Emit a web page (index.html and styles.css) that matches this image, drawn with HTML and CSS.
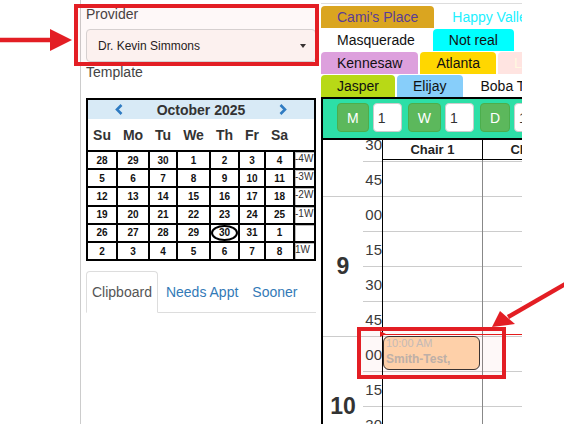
FILE: index.html
```html
<!DOCTYPE html>
<html lang="en">
<head>
  <meta charset="UTF-8">
  <title>Schedule</title>
  <link rel="stylesheet" href="styles.css">
</head>
<body>
<div class="page">
  <div class="gutter"></div>

  <!-- Left column: provider, month calendar, lists -->
  <aside class="sidebar">
    <div class="field-label">Provider</div>
    <div class="select">
      <span>Dr. Kevin Simmons</span>
      <span class="caret"></span>
    </div>
    <div class="field-label">Template</div>

    <div class="calendar">
      <div class="cal-head">
        <svg class="chev" width="8" height="11" viewBox="0 0 8 11"><path d="M6.5 1 L2 5.5 L6.5 10"/></svg>
        <span class="cal-title">October 2025</span>
        <svg class="chev" width="8" height="11" viewBox="0 0 8 11"><path d="M1.5 1 L6 5.5 L1.5 10"/></svg>
      </div>
      <div class="cal-days">
        <span>Su</span><span>Mo</span><span>Tu</span><span>We</span><span>Th</span><span>Fr</span><span>Sa</span><span></span>
      </div>
      <div class="cal-grid">
        <span>28</span><span>29</span><span>30</span><span>1</span><span>2</span><span>3</span><span>4</span><span class="week">-4W</span>
        <span>5</span><span>6</span><span>7</span><span>8</span><span>9</span><span>10</span><span>11</span><span class="week">-3W</span>
        <span>12</span><span>13</span><span>14</span><span>15</span><span>16</span><span>17</span><span>18</span><span class="week">-2W</span>
        <span>19</span><span>20</span><span>21</span><span>22</span><span>23</span><span>24</span><span>25</span><span class="week">-1W</span>
        <span>26</span><span>27</span><span>28</span><span>29</span><span><i class="today">30</i></span><span>31</span><span>1</span><span class="week"></span>
        <span>2</span><span>3</span><span>4</span><span>5</span><span>6</span><span>7</span><span>8</span><span class="week">1W</span>
      </div>
    </div>

    <ul class="nav-tabs">
      <li class="active">Clipboard</li>
      <li>Needs Appt</li>
      <li>Sooner</li>
    </ul>
  </aside>

  <!-- Right column: offices, range stepper, day grid -->
  <section class="board">
    <div class="clinics">
      <div class="clinic-row">
        <span class="clinic cami">Cami's Place</span>
        <span class="clinic happy">Happy Valley</span>
      </div>
      <div class="clinic-row">
        <span class="clinic">Masquerade</span>
        <span class="clinic notreal">Not real</span>
      </div>
      <div class="clinic-row">
        <span class="clinic kennesaw">Kennesaw</span>
        <span class="clinic atlanta">Atlanta</span>
        <span class="clinic lawrence">Lawrenceville</span>
      </div>
      <div class="clinic-row">
        <span class="clinic jasper">Jasper</span>
        <span class="clinic elijay">Elijay</span>
        <span class="clinic">Boba Tea</span>
      </div>
    </div>

    <div class="toolbar">
      <button class="step-btn">M</button>
      <input class="step-input" type="text" value="1">
      <button class="step-btn">W</button>
      <input class="step-input" type="text" value="1">
      <button class="step-btn">D</button>
      <input class="step-input" type="text" value="1">
    </div>

    <div class="schedule">
      <div class="slots">
        <div class="hours">
          <div class="hour part"></div>
          <div class="hour">9</div>
          <div class="hour">10</div>
        </div>
        <div class="minutes">
          <div class="minute">30</div>
          <div class="minute">45</div>
          <div class="minute">00</div>
          <div class="minute">15</div>
          <div class="minute">30</div>
          <div class="minute">45</div>
          <div class="minute">00</div>
          <div class="minute">15</div>
          <div class="minute">30</div>
          <div class="minute">45</div>
        </div>
        <div class="chair">
          <div class="slot"></div><div class="slot"></div><div class="slot"></div><div class="slot"></div><div class="slot"></div>
          <div class="slot"></div><div class="slot"></div><div class="slot"></div><div class="slot"></div><div class="slot"></div>
          <div class="appt">
            <div class="appt-time">10:00 AM</div>
            <div class="appt-name">Smith-Test,</div>
          </div>
        </div>
        <div class="chair">
          <div class="slot"></div><div class="slot"></div><div class="slot"></div><div class="slot"></div><div class="slot"></div>
          <div class="slot"></div><div class="slot"></div><div class="slot"></div><div class="slot"></div><div class="slot"></div>
        </div>
      </div>

      <div class="chair-head">
        <div class="chair-name">Chair 1</div>
        <div class="chair-name">Chair 2</div>
      </div>
      <div class="now-line"></div>
    </div>
  </section>

  <!-- callouts -->
  <svg class="marks" width="564" height="424" viewBox="0 0 564 424">
    <rect x="76" y="6" width="241" height="58"/>
    <rect x="359" y="329" width="145" height="48"/>
    <line x1="0" y1="40" x2="54" y2="40"/>
    <polygon points="50,29 72,40 50,51"/>
    <line x1="567" y1="283" x2="508" y2="317"/>
    <polygon points="492,327 500,311 515,324"/>
  </svg>
</div>
</body>
</html>
```

FILE: styles.css
```css
* { box-sizing: border-box; margin: 0; padding: 0; }
body { font-family: 'Liberation Sans', Arial, sans-serif; background: #fff; color: #222; }

.page {
  position: relative;
  display: flex;
  width: 564px;
  height: 424px;
  overflow: hidden;
}

.gutter {
  width: 81px;
  flex-shrink: 0;
  border-right: 1px solid #ccc;
}

/* ---------- sidebar ---------- */

.sidebar {
  width: 240px;
  flex-shrink: 0;
  padding: 4px 5px 0;
}

.field-label {
  font-size: 14px;
  line-height: 20px;
  color: #444;
}

.select {
  margin-top: 5px;
  height: 33px;
  display: flex;
  align-items: center;
  justify-content: space-between;
  padding: 0 9px 0 11px;
  background: #fdf8f6;
  border: 1px solid #d6d6d6;
  border-radius: 4px;
  font-size: 12px;
  color: #222;
}

.caret {
  border-top: 4px solid #333;
  border-left: 3.5px solid transparent;
  border-right: 3.5px solid transparent;
}

.calendar {
  margin-top: 16px;
  border: 2px solid #000;
}

.cal-head {
  height: 19px;
  background: #d8eaf6;
  display: flex;
  align-items: center;
  justify-content: space-between;
  padding: 0 27px;
}

.chev path {
  fill: none;
  stroke: #2f7bc2;
  stroke-width: 2.6;
}

.cal-title {
  font-weight: bold;
  font-size: 14px;
  color: #333;
}

.cal-days,
.cal-grid {
  display: grid;
  grid-template-columns: 28px 30px 26px 31px 27px 24px 27px 19px;
  column-gap: 2px;
}

.cal-days {
  height: 31px;
  align-items: center;
  text-align: center;
  font-weight: bold;
  font-size: 14px;
  color: #333;
}

.cal-grid {
  row-gap: 2px;
  grid-auto-rows: 16.2px;
  background: #000;
  border-top: 2px solid #000;
}

.cal-grid span {
  background: #fff;
  display: flex;
  align-items: center;
  justify-content: center;
  font-size: 10px;
  font-weight: bold;
  color: #111;
}

.cal-grid .week {
  align-items: flex-start;
  justify-content: flex-start;
  font-weight: normal;
  color: #333;
  line-height: 12px;
  padding-top: 1px;
  box-shadow: inset 1px 1px 0 #bbb;
}

.today {
  width: 100%;
  height: 100%;
  display: flex;
  align-items: center;
  justify-content: center;
  font-style: normal;
  border: 2px solid #000;
  border-radius: 50%;
}

.nav-tabs {
  list-style: none;
  display: flex;
  margin-top: 10px;
  border-bottom: 1px solid #ddd;
}

.nav-tabs li {
  padding: 12px 5px;
  margin-right: 2px;
  margin-bottom: -1px;
  border: 1px solid transparent;
  border-radius: 4px 4px 0 0;
  font-size: 14px;
  line-height: 16px;
  color: #337ab7;
}

.nav-tabs li.active {
  color: #555;
  background: #fff;
  border-color: #ddd;
  border-bottom-color: #fff;
}

/* ---------- board ---------- */

.board {
  width: 201px;
  flex-shrink: 0;
  overflow: hidden;
}

.clinics {
  margin-top: 3px;
  padding-top: 2px;
  border-top: 1px solid #ddd;
}

.clinic-row {
  display: flex;
  height: 22px;
  margin-top: 1px;
}

.clinic-row:first-child { margin-top: 0; }

.clinic {
  flex-shrink: 0;
  padding: 0 16px;
  margin-right: 2px;
  line-height: 22px;
  font-size: 14px;
  white-space: nowrap;
  color: #111;
  border-radius: 4px 4px 0 0;
}

.cami { background: #daa520; color: #5a3d96; }
.happy { color: #22f0ff; }
.notreal { background: #00ffff; }
.kennesaw { background: #dda0dd; }
.atlanta { background: #ffd700; }
.lawrence { background: #ffe4e1; color: #fff8e0; }
.jasper { background: #b8d916; }
.elijay { background: #87cefa; }

.toolbar {
  display: flex;
  align-items: flex-start;
  height: 43px;
  padding: 4px 0 0 14px;
  background: #2ddfa7;
  border: 2px solid #000;
  border-right: 0;
}

.step-btn {
  flex-shrink: 0;
  height: 29px;
  padding: 0 9px;
  margin-right: 4px;
  background: #5cb85c;
  border: 1px solid #4cae4c;
  border-radius: 4px;
  color: #fff;
  font-family: 'Liberation Sans', Arial, sans-serif;
  font-size: 14px;
}

.step-input {
  flex-shrink: 0;
  width: 29px;
  height: 29px;
  margin-right: 6px;
  padding-left: 4px;
  background: #fff;
  border: 1px solid #ccc;
  border-radius: 4px;
  color: #333;
  font-family: 'Liberation Sans', Arial, sans-serif;
  font-size: 14px;
}

.schedule {
  position: relative;
  height: 284px;
  overflow: hidden;
  border-left: 2px solid #000;
}

.slots {
  display: flex;
  margin-top: -13px;
}

.hours { width: 40px; flex-shrink: 0; }

.hour {
  height: 140px;
  display: flex;
  align-items: center;
  justify-content: center;
  border-bottom: 1px solid #ccc;
  font-size: 23px;
  font-weight: bold;
  color: #333;
}

.hour.part { height: 70px; }

.minutes {
  width: 20px;
  flex-shrink: 0;
  border-right: 1px solid #000;
}

.minute {
  height: 35px;
  line-height: 35px;
  text-align: right;
  border-bottom: 1px solid #ccc;
  font-size: 15px;
  color: #3a3a3a;
}

.chair {
  position: relative;
  width: 100px;
  flex-shrink: 0;
  border-right: 1px solid #888;
}

.slot {
  height: 35px;
  border-bottom: 1px solid #ccc;
}

.appt {
  position: absolute;
  top: 209px;
  left: 0;
  width: 97px;
  height: 34px;
  padding: 0 2px;
  background: #ffd6ae;
  border: 1px solid #333;
  border-radius: 6px;
}

.appt-time {
  font-size: 11px;
  line-height: 12px;
  color: #c4c0bc;
}

.appt-name {
  margin-top: 3px;
  font-size: 12px;
  font-weight: bold;
  line-height: 14px;
  color: #bdb4ac;
}

.chair-head {
  position: absolute;
  top: 0;
  left: 60px;
  display: flex;
}

.chair-name {
  width: 100px;
  height: 20px;
  flex-shrink: 0;
  background: #fff;
  border-right: 1px solid #000;
  border-bottom: 1px solid #000;
  text-align: center;
  font-size: 13px;
  font-weight: bold;
  line-height: 19px;
  color: #222;
}

.now-line {
  position: absolute;
  top: 194px;
  left: 57px;
  right: 0;
  height: 1px;
  background: #e51c1c;
}

.now-line::before {
  content: "";
  position: absolute;
  left: 0;
  top: -3px;
  border-left: 6px solid #e51c1c;
  border-top: 3.5px solid transparent;
  border-bottom: 3.5px solid transparent;
}

/* ---------- callouts ---------- */

.marks {
  position: absolute;
  left: 0;
  top: 0;
  pointer-events: none;
}

.marks rect {
  fill: rgba(235, 40, 30, 0.03);
  stroke: #e31e24;
  stroke-width: 4;
}

.marks line {
  stroke: #e31e24;
  stroke-width: 4.5;
}

.marks polygon { fill: #e31e24; }
```
